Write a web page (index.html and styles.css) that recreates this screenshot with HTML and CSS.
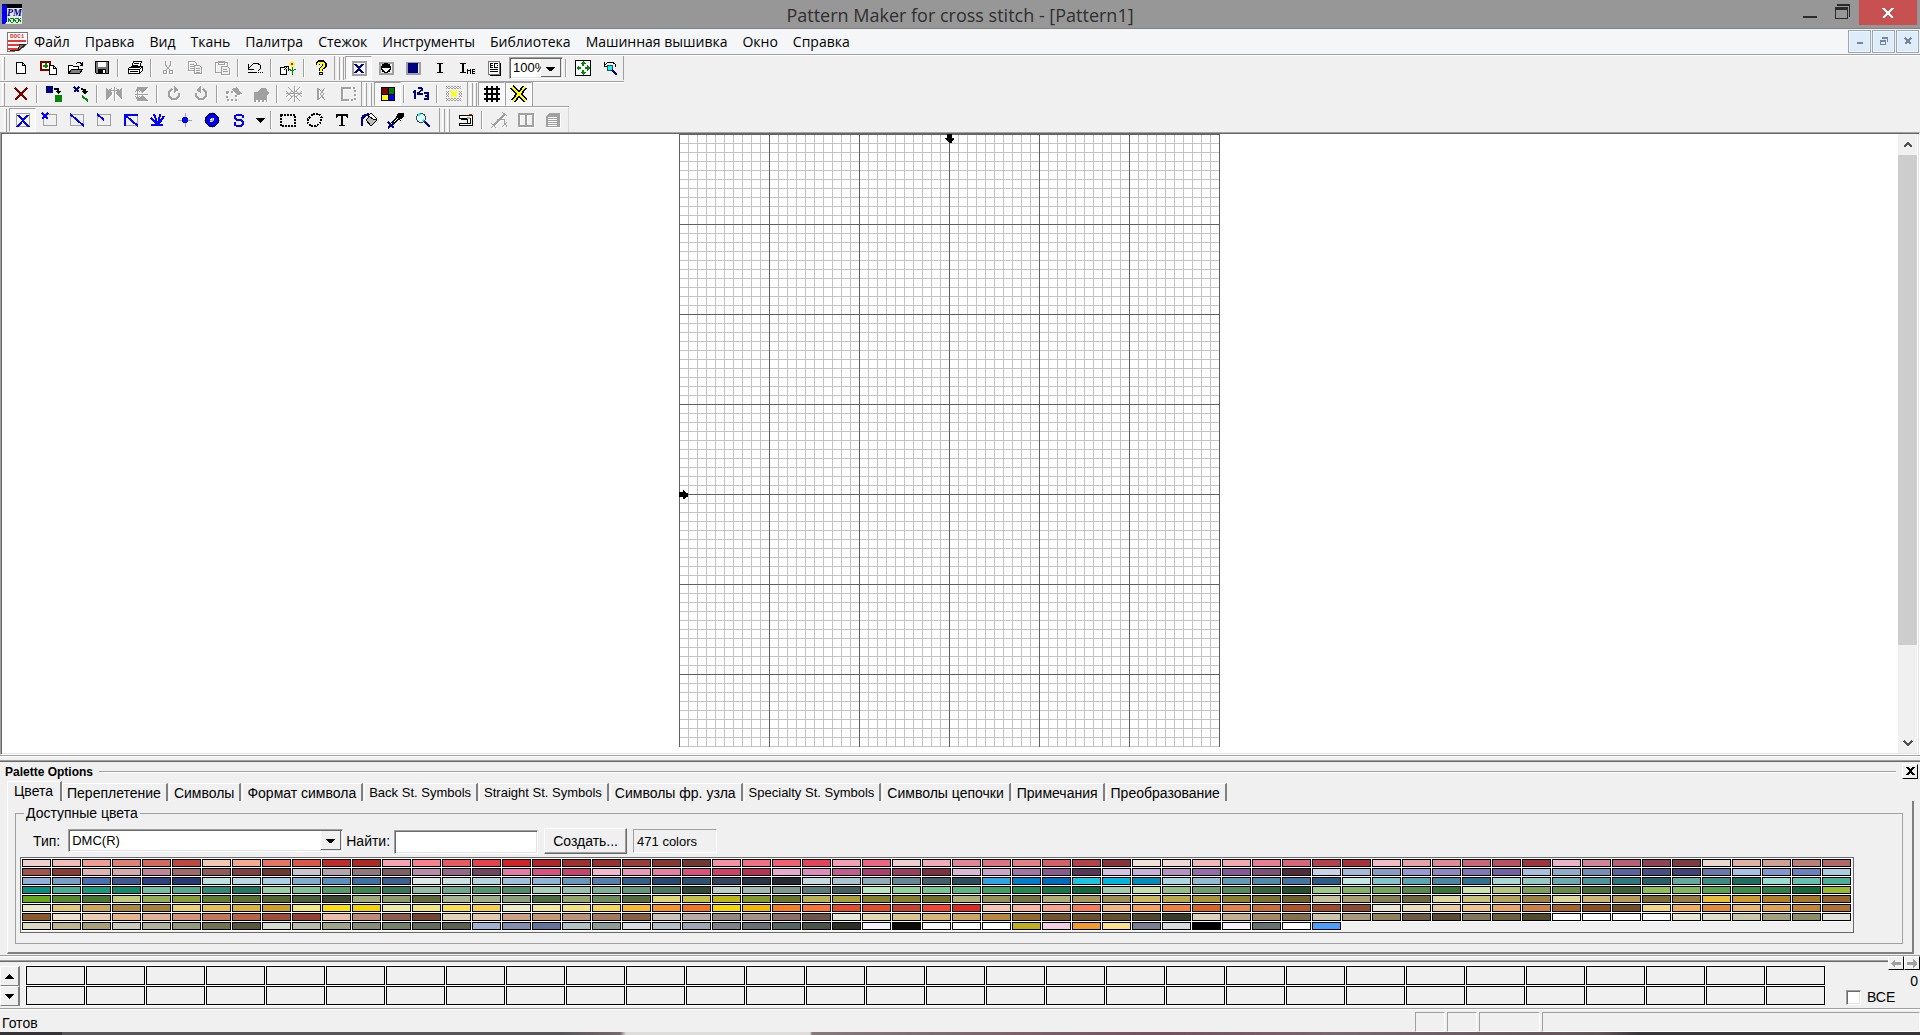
FILE: index.html
```html
<!DOCTYPE html>
<html lang="ru">
<head>
<meta charset="utf-8">
<title>Pattern Maker for cross stitch - [Pattern1]</title>
<link rel="stylesheet" href="styles.css">
</head>
<body>
<header class="titlebar">
  <svg class="app-icon" width="20" height="20" viewBox="0 0 20 20"><path fill="#000" d="M0 0h20v4H0z"/><path fill="#e8e8f0" d="M4 4h16v16H4z"/><path fill="#00f" d="M0 1h5v17l-3 2H0z"/><text x="5" y="12" font-family="Liberation Serif, serif" font-size="10" font-weight="700" font-style="italic" fill="#000080">PM</text><g stroke="#080" fill="none"><path d="M6 14l3 4h2l3-4h2l3 4M6 18l3-4h2l3 4h2l3-4"/></g></svg>
  <h1>Pattern Maker for cross stitch - [Pattern1]</h1>
  <div class="window-buttons">
    <button aria-label="Свернуть"><svg width="16" height="20"><path fill="#2b2b2b" d="M1 16h14v2H1z"/></svg></button>
    <button aria-label="Восстановить"><svg width="16" height="20"><path fill="#2b2b2b" d="M2 4h13v13h-1V6H2zM0 7h13v12H0zM1 10v8h11v-8z" fill-rule="evenodd"/></svg></button>
    <button class="close" aria-label="Закрыть"><svg width="12" height="10"><path d="M1 0l10 10M11 0L1 10" stroke="#fff" stroke-width="2"/></svg></button>
  </div>
</header>

<nav class="menubar">
  <svg width="20" height="20" viewBox="0 0 20 20" class="doc-icon"><path d="M0 0h20v12l-7 6-9 2-4-1z" fill="#fff" stroke="#777"/><text x="3" y="6" font-family="Liberation Mono, monospace" font-size="6" font-weight="700" fill="#e03030">DOC1</text><path d="M1 8l2 2 2-2 2 2 2-2 2 2 2-2 2 2 2-2 2 2M1 10l2-2 2 2 2-2 2 2 2-2 2 2 2-2 2 2 2-2M1 12l2 2 2-2 2 2 2-2 2 2 2-2 2 2M1 14l2-2 2 2 2-2 2 2 2-2 2 2 2-2M1 16l2 2 2-2 2 2 2-2 2 2M1 18l2-2 2 2 2-2 2 2 2-2" stroke="#e33" fill="none"/><path d="M19 12l-6 0-2 6-8 1 9-1z" fill="#777" stroke="#222"/></svg>
  <a href="#">Файл</a><a href="#">Правка</a><a href="#">Вид</a><a href="#">Ткань</a><a href="#">Палитра</a><a href="#">Стежок</a><a href="#">Инструменты</a><a href="#">Библиотека</a><a href="#">Машинная вышивка</a><a href="#">Окно</a><a href="#">Справка</a>
  <div class="mdi-buttons">
    <button aria-label="Свернуть документ"><svg width="8" height="8"><path fill="#76869a" d="M1 5h6v2H1z"/></svg></button>
    <button aria-label="Восстановить документ"><svg width="8" height="8"><path fill="#76869a" fill-rule="evenodd" d="M2 0h6v5H7V2H2zM0 3h6v5H0zM1 5v2h4V5z"/></svg></button>
    <button aria-label="Закрыть документ"><svg width="8" height="8"><path d="M1 1l6 6M7 1L1 7" stroke="#76869a" stroke-width="2"/></svg></button>
  </div>
</nav>

<div class="toolbars">
  <div class="row row-top">
    <div class="band"><i class="grip"></i>
      <button><svg viewBox="0 0 16 16"><path fill="#fff" stroke="#000" d="M3.500 2.500h6l3 3v8h-9zM9.500 2.500v3h3"/></svg></button>
      <button><svg viewBox="0 0 16 16"><path d="M1 2h9v8H1z" fill="#fff" stroke="#800000" stroke-width="2"/><path d="M5.500 3v5M3 5.500h5" stroke="#080" stroke-width="2"/><path fill="#fff" stroke="#000" d="M9.500 5.500h4l3 3v6h-7zM13.500 5.500v3h3"/></svg></button>
      <button><svg viewBox="0 0 16 16"><path fill="#fff" stroke="#000" d="M1.500 13.500v-8h4l1 1h5v3"/><path fill="#808080" stroke="#000" d="M1.500 13.500l3-4h11l-3 4z"/><path stroke="#000" fill="none" d="M9 3.500l2-1h2l2 2M15.500 2v3h-3"/></svg></button>
      <button><svg viewBox="0 0 16 16"><path fill="#777" stroke="#000" d="M1.500 1.500h13v12h-12l-1-1z"/><path fill="#fff" d="M4 2h8v5H4z"/><path d="M4 9h8v5H4z"/><path fill="#fff" d="M9 10h2v3H9z"/></svg></button>
      <i class="sep"></i>
      <button><svg viewBox="0 0 16 16"><path fill="#fff" stroke="#000" d="M4.500 7.500l2-6h8l-2 6zM1.500 8.500l3-2h11l-3 3v4h-11zM1.500 9.500h11l3-3v4l-3 3M3 11.500h8"/><path stroke="#000" d="M7 3.500h5M6 5.500h5"/></svg></button>
      <i class="sep"></i>
      <button disabled><svg viewBox="0 0 16 16"><path class="dis" d="M5.500 1v4l5 6M10.500 1v4l-5 6M7 8h2"/><circle class="dis" cx="5" cy="12" r="2"/><circle class="dis" cx="11" cy="12" r="2"/></svg></button>
      <button disabled><svg viewBox="0 0 16 16"><path class="dis" d="M1.500 1.500h6l2 2v7h-8zM3 4.500h4M3 6.500h4M3 8.500h4"/><path class="dis paper" d="M7.500 5.500h5l2 2v6h-7zM9 8.500h4M9 10.500h4M9 12.500h4"/></svg></button>
      <button disabled><svg viewBox="0 0 16 16"><path class="dis" d="M1.500 2.500h12v10h-12zM4.500 1.500h6v3h-6z"/><path class="dis paper" d="M7.500 6.500h6l2 2v6h-8zM9 9.500h4M9 11.500h5"/></svg></button>
      <i class="sep"></i>
      <button><svg viewBox="0 0 16 16"><path fill="none" stroke="#000" d="M1.500 4v5h5M2 8l3-3 2-2h3l3 2v4l-2 2M1 12.500h9M11 12.500h1M13 12.500h1M15 12.500h1"/></svg></button>
      <i class="sep"></i>
      <button><svg viewBox="0 0 16 16"><path fill="#fff" stroke="#000" d="M.500 7.500h4l2 2v5h-6z"/><path fill="none" stroke="#000" d="M4 10l4-4M4 6.500h4v4"/><path d="M9 3h6v2H9zM11 1h2v6h-2z" fill="#ff0"/><path d="M11 3h2v2h-2z" fill="red"/><path d="M12.500 7v8M9 9l3 2 4-2" stroke="#080" fill="none"/></svg></button>
      <i class="sep"></i>
      <button><svg viewBox="0 0 16 16"><path d="M4.500 5V4l1.500-2h4l1.500 2v2L8 9v2M8 12v3" fill="none" stroke="#000" stroke-width="4"/><path d="M5 5V4l1.500-1h3L11 4v2L8 9v2M8 13v1" fill="none" stroke="#ff0" stroke-width="2"/></svg></button>
    </div>
    <div class="band tight"><i class="grip"></i><i class="grip"></i>
      <button class="on"><svg viewBox="0 0 16 16"><path d="M1.500 1.500h13v13h-13z" class="dis2"/><path d="M4 4l8 9M12 4l-8 9" stroke="#000080" stroke-width="2"/></svg></button>
      <button><svg viewBox="0 0 16 16"><path d="M1.500 2.500h13v11h-13z" class="dis2"/><circle cx="8" cy="8" r="5"/><path d="M4 8h8l-3 4H7z" fill="#fff"/></svg></button>
      <button><svg viewBox="0 0 16 16"><path d="M1.500 2.500h13v11h-13z" class="dis2"/><path fill="#000080" d="M3 3h10v10H3z"/></svg></button>
      <button><svg viewBox="0 0 16 16"><path d="M5 3h6v1H9v8h2v1H5v-1h2V4H5z"/></svg></button>
      <button><svg viewBox="0 0 16 16"><path d="M1 3h6v1H5v8h2v1H1v-1h2V4H1z"/><path fill="none" stroke="#000" d="M8.500 14V9M11.500 14V9M9 10.500h2M16 9.500h-2.500v4H16M14 11.500h2"/></svg></button>
      <button><svg viewBox="0 0 16 16"><path fill="#fff" stroke="#777" d="M2.500 1.500h11v13h-11z"/><path d="M14 3v12H4" fill="none" stroke="#000"/><path fill="none" stroke="#000" d="M4 3.500h3M4 5.500h3M4 7.500h3M8 3.500h4M8 5.500h1M11 5.500h1M8 7.500h4M4 9.500h8M4 11.500h8M4.500 3v5M8.500 3v5"/></svg></button>
      <select class="zoom" aria-label="Масштаб"><option>100%</option></select>
      <i class="sep"></i>
      <button><svg viewBox="0 0 16 16"><path fill="#fff" stroke="#000" d="M.500.500h15v15H.500z"/><path fill="#080" d="M8 1l3 3H9v2H7V4H5zM8 15l3-3H9v-2H7v2H5zM1 8l3-3v2h2v2H4v2zM15 8l-3-3v2h-2v2h2v2z"/></svg></button>
      <button><svg viewBox="0 0 16 16"><path d="M2.500 2v4h4M3 5l3-3h4l3 2 1 3" fill="none" stroke="#000"/><circle cx="8" cy="8" r="3" fill="#0ff" stroke="#444"/><path d="M10 10l5 5" stroke="#000080" stroke-width="2"/></svg></button>
    </div>
  </div>

  <div class="row">
    <div class="band"><i class="grip"></i>
      <button><svg viewBox="0 0 16 16"><path d="M2 2l3 3 3 3 6 6M14 2L2 14" fill="none" stroke="#800000" stroke-width="1.500"/></svg></button>
      <i class="sep"></i>
      <button><svg viewBox="0 0 16 16"><path fill="#000080" d="M0 0h7v7H0z"/><path fill="#080" d="M9 9h7v7H9z"/><path fill="none" stroke="#000" stroke-width="2" d="M8 3h4v4"/><path d="M9 5h6l-3 3z"/></svg></button>
      <button><svg viewBox="0 0 16 16"><path d="M1 1l5 5M6 1L1 6" stroke="#000080" stroke-width="2"/><path d="M8 3l4 1v3" fill="none" stroke="#000" stroke-width="2"/><path d="M9 5h6l-3 4z"/><path d="M9 10l6 5" stroke="#080" stroke-width="2"/></svg></button>
      <i class="sep"></i>
      <button disabled><svg viewBox="0 0 16 16"><path fill="#a0a0a0" d="M0 1l6 7-6 6zM16 1l-6 7 6 6z"/><path class="dis" d="M8 1v14M4 4.500h8M6 2l-3 2.500L6 7M10 2l3 2.500L10 7"/></svg></button>
      <button disabled><svg viewBox="0 0 16 16"><path fill="#a0a0a0" d="M3 1h12L9 7zM3 15h12L9 9z"/><path class="dis" d="M2 8h13M4.500 4v8M2 6l2.500-3L7 6M2 10l2.500 3L7 10"/></svg></button>
      <i class="sep"></i>
      <button disabled><svg viewBox="0 0 16 16"><path class="dis2" d="M6 3L3 6v4l3 3h4l3-3V7"/><path fill="#a0a0a0" d="M8 0l5 4-5 3z"/></svg></button>
      <button disabled><svg viewBox="0 0 16 16"><path class="dis2" d="M10 3l3 3v4l-3 3H6l-3-3V7"/><path fill="#a0a0a0" d="M8 0L3 4l5 3z"/></svg></button>
      <i class="sep"></i>
      <button disabled><svg viewBox="0 0 16 16"><path class="dis2" stroke-dasharray="2 2" d="M1 6h9v8H1z"/><path fill="#a0a0a0" d="M6 3l5-2 2 3 3 4-5 1z"/></svg></button>
      <button disabled><svg viewBox="0 0 16 16"><path fill="#a0a0a0" d="M1 6h3l2-2 2-2h5l3 5-2 3v4H1z"/><path class="dis2" stroke-dasharray="2 2" d="M1 15h13"/></svg></button>
      <i class="sep"></i>
      <button disabled><svg viewBox="0 0 16 16"><path class="dis" d="M2 1l6 6 6-6M0 5l3 3-3 3M6 5L3 8l3 3M10 5l3 3-3 3M16 5l-3 3 3 3M2 15l6-6 6 6M8 0v16M0 7.500h16"/></svg></button>
      <button disabled><svg viewBox="0 0 16 16"><path class="dis2" d="M5 2v12"/><path class="dis" d="M6 3l5 5-5 5M12 2L7 8l5 6"/></svg></button>
      <button disabled><svg viewBox="0 0 16 16"><path class="dis2" d="M9 2H2v12h7"/><path class="dis2" stroke-dasharray="2 2" d="M9 2h6v12H9"/></svg></button>
    </div>
    <div class="band"><i class="grip"></i><i class="grip"></i>
      <button class="on"><svg viewBox="0 0 16 16"><path d="M1 1h14v14H1z"/><path fill="maroon" d="M2 2h6v6H2z"/><path fill="green" d="M9 2h5v6H9z"/><path fill="#ff0" d="M2 9h6v5H2z"/><path fill="#00f" d="M9 9h5v5H9z"/></svg></button>
      <i class="sep"></i>
      <button><svg viewBox="0 0 16 16"><path fill="none" stroke="#000080" stroke-width="1.500" d="M0 6l2-1v8M5 3l1-1h2l1 1v1L5 7v1h5M11 7h4v6h-4M12 10h3"/></svg></button>
      <i class="sep"></i>
      <button><svg viewBox="0 0 16 16"><path class="dis" d="M0 3l3-3 3 3 3-3 3 3 3-3M0 0l3 3 3-3 3 3 3-3 3 3M0 15l3-3 3 3 3-3 3 3 3-3M0 12l3 3 3-3 3 3 3-3 3 3M0 5l3 3-3 3M3 5L0 8l3 3M13 5l3 3-3 3M16 5l-3 3 3 3"/><path d="M5 5l6 6M11 5l-6 6" stroke="#ff0" stroke-width="2"/></svg></button>
    </div>
    <div class="band tight"><i class="grip"></i><i class="grip"></i>
      <button class="on"><svg viewBox="0 0 16 16"><path d="M3 0v16M8 0v16M13 0v16M0 3h16M0 8h16M0 13h16" stroke="#000" stroke-width="2"/></svg></button>
      <button class="on"><svg viewBox="0 0 16 16"><path d="M1 1l14 14M14 1L2 15" stroke="#000" stroke-width="5"/><path d="M1 1l14 14M14 1L2 15" stroke="#ff0" stroke-width="2"/></svg></button>
    </div>
  </div>

  <div class="row row-bottom">
    <div class="band roomy"><i class="grip"></i>
      <button class="on"><svg viewBox="0 0 16 16"><path class="dis" d="M1.500 1.500h13v13h-13z"/><path d="M3 3l11 12M13 3L2 15" stroke="#00f" stroke-width="2"/></svg></button>
      <button><svg viewBox="0 0 16 16"><path class="dis" d="M1.500 2.500h13v11h-13z"/><path d="M0 1l6 6M6 1L0 7" stroke="#00f" stroke-width="2"/></svg></button>
      <button><svg viewBox="0 0 16 16"><path class="dis" d="M1.500 2.500h13v11h-13z"/><path d="M1 2l14 12" stroke="#00f" stroke-width="2"/></svg></button>
      <button><svg viewBox="0 0 16 16"><path class="dis" d="M1.500 2.500h13v11h-13z"/><path d="M1 2l7 6" stroke="#00f" stroke-width="2"/></svg></button>
      <button><svg viewBox="0 0 16 16"><path class="dis" d="M1.500 2.500h13v11h-13z"/><path d="M2 14V3h13M2 3l13 11" fill="none" stroke="#00f" stroke-width="2"/></svg></button>
      <button><svg viewBox="0 0 16 16"><path d="M8 13L1 6M8 13L4 2M8 13l2-11M8 13l6-9M1 13h12" fill="none" stroke="#00f" stroke-width="2"/></svg></button>
      <button><svg viewBox="0 0 16 16"><path class="dis" d="M8 1v14M1 8h14"/><circle cx="8" cy="8" r="3" fill="#00f"/></svg></button>
      <button><svg viewBox="0 0 16 16"><path class="dis" d="M8 0v16M0 8h16"/><circle cx="8" cy="8" r="4.500" fill="none" stroke="#000080" stroke-width="5"/><circle cx="8" cy="8" r="4" fill="none" stroke="#00f" stroke-width="3"/></svg></button>
      <button><svg viewBox="0 0 16 16"><path fill="none" stroke="#00f" stroke-width="2" d="M12 6V4l-2-1H6L4 4v2l2 2h4l2 2v2l-2 2H6l-2-1v-3"/></svg></button>
      <button class="narrow"><svg viewBox="0 0 16 16"><path d="M3 6h10L8 11z"/></svg></button>
      <i class="sep"></i>
      <button><svg viewBox="0 0 16 16"><path d="M1 3h14v11H1z" fill="none" stroke="#000" stroke-width="2" stroke-dasharray="2 1"/></svg></button>
      <button><svg viewBox="0 0 16 16"><path d="M6 2h6l3 4-2 5-4 3H4L1 11V7z" fill="none" stroke="#000" stroke-width="2" stroke-dasharray="2 1"/></svg></button>
      <button><svg viewBox="0 0 16 16"><path d="M2 2h12v4h-1L12 4H9v9h2v1H5v-1h2V4H4L3 6H2z"/></svg></button>
      <button><svg viewBox="0 0 16 16"><path fill="#bbb" stroke="#000" d="M5 8l6-6 5 6-6 6z"/><path fill="#fff" stroke="#000" d="M7 4l3-3 6 6-2 1z"/><path d="M8 2L2 4v3M5 4L1 6v8" fill="none" stroke="#000080" stroke-width="2"/></svg></button>
      <button><svg viewBox="0 0 16 16"><path d="M11 1h4v4l-3 2-3-3zM8 4l5 5" stroke="#000"/><path d="M10 6l-6 6" stroke="#000" stroke-width="3"/><path d="M10 6l-6 6" stroke="#fff"/><path d="M0 10l6 6M6 11l-6 5" stroke="#000080" stroke-width="2"/></svg></button>
      <button><svg viewBox="0 0 16 16"><circle cx="6" cy="6" r="4.500" fill="#dff" stroke="#444"/><path d="M3 4l2-2M8 8l1 1" stroke="#0ff" stroke-width="2"/><path d="M10 10l5 5" stroke="#000080" stroke-width="2"/></svg></button>
    </div>
    <div class="band last"><i class="grip"></i><i class="grip"></i>
      <button><svg viewBox="0 0 16 16"><path fill="#fff" stroke="#000" d="M1.500 6V3.500h13v10h-13v-2h8v-4h-6V6z"/><path d="M3 6.500h9M12.500 6v6M3 11.500h9" stroke="#000"/><path fill="red" d="M11 2h3v1h-3z"/><path fill="#aa8" d="M9 5h3v2H9z"/></svg></button>
      <i class="sep"></i>
      <button disabled><svg viewBox="0 0 16 16"><path class="dis2" d="M2 14L14 2"/><path class="dis" d="M0 11l5 5M5 11l-5 5M11 0l5 4M6 7h7v3l3 5M16 10l-5 5"/></svg></button>
      <button disabled><svg viewBox="0 0 16 16"><path class="dis2" d="M1 2h14v12H1zM8 2v12"/></svg></button>
      <button disabled><svg viewBox="0 0 16 16"><path fill="#a0a0a0" d="M4 1h11v14H1V4z"/><path stroke="#fff" d="M3 5.500h9M3 7.500h9M3 9.500h9M3 11.500h9M3 13.500h9"/></svg></button>
    </div>
  </div>
</div>

<main class="workspace">
  <div class="canvas">
    <div class="chart">
      <svg class="mark-top" width="9" height="9"><path d="M2 0h5v4h2v1L7 8 6 9H4L3 8 1 5H0V4h2z"/></svg>
      <svg class="mark-left" width="9" height="9"><path d="M0 2v5h4v2h1l3-2 1-1V4L8 3 5 1V0H4v2z"/></svg>
    </div>
  </div>
  <div class="scrollbar">
    <button aria-label="Вверх"><svg width="10" height="8"><path d="M1 6l4-4 4 4" fill="none" stroke="#505050" stroke-width="2"/></svg></button>
    <div class="track"><div class="thumb"></div></div>
    <button aria-label="Вниз"><svg width="10" height="8"><path d="M1 2l4 4 4-4" fill="none" stroke="#505050" stroke-width="2"/></svg></button>
  </div>
</main>

<section class="options">
  <div class="options-head">
    <h2>Palette Options</h2><hr>
    <button class="x-button" aria-label="Закрыть панель"><svg width="9" height="8"><path d="M1 0l7 8M8 0L1 8" stroke="#000" stroke-width="2"/></svg></button>
  </div>
  <div class="tabs">
    <button class="active">Цвета</button><button>Переплетение</button><button>Символы</button><button>Формат символа</button><button lang="en">Back St. Symbols</button><button lang="en">Straight St. Symbols</button><button>Символы фр. узла</button><button lang="en">Specialty St. Symbols</button><button>Символы цепочки</button><button>Примечания</button><button>Преобразование</button>
  </div>
  <div class="page">
    <fieldset>
      <legend>Доступные цвета</legend>
      <div class="filters">
        <label for="type">Тип:</label>
        <select id="type" lang="en"><option>DMC(R)</option></select>
        <label for="find">Найти:</label>
        <input id="find" type="text">
        <button class="create">Создать...</button>
        <output lang="en">471 colors</output>
      </div>
      <div class="swatches" id="swatches"></div>
    </fieldset>
  </div>
</section>

<section class="palette">
  <div class="spin">
    <button aria-label="Предыдущий ряд"><svg width="9" height="5"><path d="M0 5h9L5 0H4z"/></svg></button>
    <button aria-label="Следующий ряд"><svg width="9" height="5"><path d="M0 0h9L5 5H4z"/></svg></button>
  </div>
  <div class="slots" id="slots"></div>
  <div class="palette-side">
    <span class="count">0</span>
    <label class="all"><input type="checkbox">ВСЕ</label>
  </div>
  <div class="pager">
    <button disabled aria-label="Назад"><svg width="10" height="9"><path fill="#a0a0a0" d="M0 4l4-4v3h6v3H4v3L0 5z"/></svg></button>
    <button disabled aria-label="Вперёд"><svg width="10" height="9"><path fill="#a0a0a0" d="M10 4L6 0v3H0v3h6v3l4-4z"/></svg></button>
  </div>
</section>

<footer class="status">
  <span class="message">Готов</span>
  <i class="pane small"></i><i class="pane small"></i><i class="pane medium"></i><i class="pane large"></i>
</footer>
<div class="taskbar"></div>
<script src="palette.js"></script>
</body>
</html>
```
FILE: styles.css
```css
* { box-sizing: border-box; }
body {
  margin: 0;
  height: 100vh;
  display: flex;
  flex-direction: column;
  overflow: hidden;
  background: #f0f0f0;
  color: #000;
  font: 14px/16px "Liberation Sans", Arial, sans-serif;
}
button, input, select { font: inherit; color: inherit; margin: 0; padding: 0; border: 0; border-radius: 0; background: none; appearance: none; }
button { display: flex; align-items: center; justify-content: center; }
svg { display: block; shape-rendering: crispEdges; }
:lang(en) { font-size: 13px; }

/* title bar */
.titlebar {
  display: grid;
  grid-template-columns: 1fr auto 1fr;
  height: 29px;
  background: #979797;
  border-bottom: 1px solid #828282;
}
.app-icon { margin: 4px 0 0 2px; }
.titlebar h1 { margin: 0; font: 18px/30px "Open Sans", sans-serif; color: #2f2f2f; }
.window-buttons { display: flex; justify-content: flex-end; align-items: flex-start; padding-right: 3px; }
.window-buttons button { width: 33px; height: 20px; }
.window-buttons .close { width: 58px; height: 25px; background: #c75050; }

/* menu */
.menubar {
  display: flex;
  align-items: center;
  gap: 1px;
  height: 26px;
  padding-left: 7px;
  background: #f5f6f8;
  border-bottom: 1px solid #a0a0a0;
  font: 14px/20px "Open Sans", sans-serif;
}
.menubar a { color: #000; text-decoration: none; padding: 0 7px; }
.doc-icon { overflow: visible; margin-right: -1px; }
.mdi-buttons { display: flex; gap: 1px; margin: 0 1px 1px auto; }
.mdi-buttons button { width: 23px; height: 23px; background: #deebf8; border: 1px solid #9aa7b8; box-shadow: inset 0 0 0 1px #eef5fc; }

/* toolbars */
.toolbars { border-top: 1px solid #fff; display: flex; flex-direction: column; align-items: flex-start; }
.row { display: flex; height: 24px; }
.row-top { height: 26px; padding-bottom: 1px; border-bottom: 1px solid #a0a0a0; box-shadow: 0 1px #fff; }
.row-bottom { height: 26px; border-top: 1px solid #a0a0a0; box-shadow: inset 0 1px #fff; padding: 1px 0 0 2px; }
.band { display: flex; align-items: center; border-right: 1px solid #a0a0a0; padding-left: 2px; }
.band.roomy { padding-right: 3px; }
.band.last { border-right-color: #d8d8d8; padding-right: 2px; }
.grip { width: 3px; height: 23px; margin-right: 2px; border-right: 1px solid #a0a0a0; border-left: 1px solid #fff; }
.tight .grip { margin-right: 1px; }
.row button { width: 27px; height: 24px; }
.row button svg { width: 16px; height: 16px; overflow: visible; }
.row button:disabled svg { filter: drop-shadow(1px 1px 0 #fff); }
.row .narrow { width: 16px; }
.row .on { background: #f8f8f8; border: 1px solid; border-color: #a0a0a0 #fff #fff #a0a0a0; }
.sep { width: 6px; height: 18px; background: linear-gradient(90deg, transparent 2px, #a0a0a0 2px 3px, #fff 3px 4px, transparent 4px); }
.dis { fill: none; stroke: #a0a0a0; }
.dis2 { fill: none; stroke: #a0a0a0; stroke-width: 2; }
.paper { fill: #f0f0f0; }
select, input[type=text] {
  background-color: #fff;
  border: 1px solid;
  border-color: #a0a0a0 #fff #fff #a0a0a0;
  box-shadow: inset 1px 1px #696969, inset -1px -1px #e3e3e3;
}
select {
  background-image:
    linear-gradient(#000, #000), linear-gradient(#000, #000), linear-gradient(#000, #000), linear-gradient(#000, #000),
    linear-gradient(#f0f0f0, #f0f0f0), linear-gradient(#696969, #696969);
  background-repeat: no-repeat;
  background-size: 9px 1px, 7px 1px, 5px 1px, 3px 1px, 19px calc(100% - 3px), 20px calc(100% - 2px);
  background-position: right 7px top 9px, right 8px top 10px, right 9px top 11px, right 10px top 12px, right 2px top 1px, right 1px top 1px;
}
.zoom { width: 54px; height: 22px; padding: 0 21px 0 3px; margin-left: 2px; font-size: 13px; text-overflow: clip; }

/* chart */
.workspace {
  flex: 1;
  min-height: 0;
  display: flex;
  background: #fff;
  border: 1px solid;
  border-color: #a0a0a0 #fff #fff #a0a0a0;
  box-shadow: inset 1px 1px #696969, inset -1px -1px #e3e3e3;
  padding: 1px 2px 1px 1px;
}
.canvas { flex: 1; display: flex; justify-content: center; padding: 0 1px 6px 0; }
.chart {
  position: relative;
  width: 541px;
  background:
    linear-gradient(90deg, #606060 1px, transparent 1px) 0 0 / 90px 90px,
    linear-gradient(#606060 1px, transparent 1px) 0 0 / 90px 90px,
    linear-gradient(90deg, #c4c4c4 1px, transparent 1px) 0 0 / 9px 9px,
    linear-gradient(#c4c4c4 1px, transparent 1px) 0 0 / 9px 9px;
}
.mark-top { position: absolute; left: 266px; top: 0; }
.mark-left { position: absolute; left: 0; top: 356px; }
.scrollbar { width: 19px; display: flex; flex-direction: column; background: #f0f0f0; }
.scrollbar button { height: 21px; }
.track { flex: 1; }
.thumb { height: 85%; background: #cdcdcd; }

/* palette options */
.options {
  padding: 6px 6px 1px 7px;
  border-top: 1px solid #a0a0a0;
  background: linear-gradient(#fff 1px, transparent 1px 4px, #a0a0a0 4px 5px, #696969 5px 6px, transparent 6px);
}
.options-head { display: flex; align-items: center; gap: 6px; height: 19px; margin: 0 -4px 0 -2px; }
.options-head h2 { margin: 0; font-size: 12px; line-height: 16px; }
.options-head hr { flex: 1; height: 2px; margin: 0; border: 0; background: linear-gradient(#a0a0a0 50%, #fff 50%); }
.x-button { width: 16px; height: 15px; margin-bottom: 1px; border: 1px solid; border-color: #fff #000 #000 #fff; }
.tabs { display: flex; align-items: flex-end; height: 20px; }
.tabs button {
  height: 18px;
  margin-right: 1px;
  padding: 0 5px 0 4px;
  white-space: nowrap;
  border: solid;
  border-width: 1px 2px 0 1px;
  border-color: #fff #808080 #f0f0f0 #fff;
}
.tabs .active { height: 20px; padding: 0 7px 2px 6px; margin-right: 0; }
.page { border-left: 1px solid #fff; border-right: 2px solid #808080; border-bottom: 2px solid #808080; padding: 4px 9px 8px 7px; }
fieldset { margin: 0; min-width: 0; padding: 6px 4px 10px 4px; border: 1px solid #a0a0a0; }
legend { padding: 0 2px; margin-left: 4px; line-height: 16px; }
.filters { display: flex; align-items: center; height: 27px; padding-left: 13px; margin-bottom: 3px; }
.filters select { width: 275px; height: 23px; margin: 0 3px 0 8px; padding-left: 3px; }
.filters input { width: 144px; height: 24px; margin: 2px 6px 0 4px; }
.create { width: 83px; height: 26px; border: 1px solid; border-color: #fff #696969 #696969 #fff; box-shadow: inset -1px -1px #a0a0a0; }
.filters output { width: 84px; height: 24px; margin: 1px 0 0 6px; padding: 4px 3px; border: 1px solid; border-color: #a0a0a0 #fff #fff #a0a0a0; }
.swatches {
  display: grid;
  grid-template-columns: repeat(61, 29px);
  grid-auto-rows: 8px;
  gap: 1px;
  width: fit-content;
  padding: 1px 2px 2px 1px;
  border: 1px solid #696969;
}
.swatches button { border: 1px solid #000; box-shadow: 0 0 0 1px #fff; }

/* used colours */
.palette {
  position: relative;
  display: flex;
  height: 53px;
  padding-top: 10px;
  border-top: 1px solid #a0a0a0;
  background: linear-gradient(#fff 1px, transparent 1px 4px, #a0a0a0 4px 5px, #696969 5px 6px, transparent 6px);
}
.spin { width: 20px; margin-right: 6px; }
.spin button { width: 20px; height: 20px; border: 1px solid; border-color: #fff #808080 #808080 #fff; border-width: 1px 2px 1px 1px; }
.slots { display: grid; grid-template-columns: repeat(30, 59px); grid-auto-rows: 19px; gap: 1px; }
.slots button { border: 1px solid #000; box-shadow: 0 0 0 1px #fff; }
.palette-side { flex: 1; display: flex; flex-direction: column; padding: 7px 2px 0 21px; }
.count { align-self: flex-end; line-height: 16px; }
.all { display: flex; align-items: center; gap: 6px; }
.all input { width: 15px; height: 15px; background: #fff; border: 1px solid; border-color: #a0a0a0 #fff #fff #a0a0a0; box-shadow: inset 1px 1px #696969, inset -1px -1px #e3e3e3; }
.pager { position: absolute; right: 0; top: 0; display: flex; background: #f0f0f0; }
.pager button { width: 16px; height: 14px; border: 1px solid; border-color: #fff #000 #000 #fff; }

/* status bar */
.status { display: flex; gap: 2px; height: 24px; padding-top: 3px; border-top: 1px solid #a0a0a0; box-shadow: inset 0 1px #fff; }
.message { flex: 1; padding-left: 2px; line-height: 22px; }
.pane { height: 20px; border: 1px solid; border-color: #a0a0a0 #fff #fff #a0a0a0; }
.small { width: 30px; }
.medium { width: 61px; }
.large { width: 378px; }
.taskbar { height: 3px; background: linear-gradient(90deg, #353338 0 62px, #58555a 62px 560px, #77686c 620px, #e0dcdc 626px 810px, #85797c 812px, #75505f 1160px, #7a6570 1340px, #5f5557 1600px, #38343a 1640px); }
```
FILE: palette.js
```js
const rows = [
  "f1d0cb f2bdb9 f09c96 df8078 d1695f bd4840 f2c9b0 f6a98c e77560 dd5744 c02c2e af2822 f6a3b3 fa8090 e85a5f e8414b d12325 b12429 9f3030 9a302f 9a3c3a 873632 703832 f491a4 f27084 f06070 e5435a f49fb3 ee6485 f0cdd0 f0aab8 e48499 dd7283 e28088 d45f69 b3434a 88343a eee2da f0d8d4 f2b8b8 f2a8ad e87e93 d9657a b5404e a8323c f2bcc4 e5a2a8 e08a96 cb6679 b95064 9c3540 ebb2c8 d48499 b96078 904358 7d3a40 ecd9ce e0b1a2 cfa192 bb7f77 b26866",
  "9f5349 883d34 dcb4b4 d4a9b0 bf859b a06a6c 8f5a58 7e4045 6c3830 cbc3cf b3a5ae 90767e 7d6065 b88cad 966888 704560 e27aa4 d65283 c8426f f2b6d0 ea98b8 e97ea3 d9507b cf4168 b43350 e6aacf de8cbb bf5f8f a8406f 993f62 7d3045 dcb8d8 cca4ca a075a8 885a90 533857 d4c2e4 c8b0dc b592c2 966ba9 85589a 7d5075 4f2c3b c9d2e8 a8b8d8 8b9bc4 979ad0 8e87c0 7f78b5 7062a3 a9bfdd 90abca 758eb5 5864a0 464f82 3f4475 6878aa a7c2e4 8098cd 6a81be abcde2",
  "8fb0da 789ec8 4a70b4 40578f 2e4180 283a75 bfe0e0 b8d8e4 a8cfe4 80adcd 5c90bc 3f70a3 3c6092 dbe8e4 cbe2e4 b4d4de 9cc0de 8eb4d8 6797bd 567fb0 355f8a 28496f 2e5072 344562 2b3548 242b33 c4d9e0 a9c4d0 8cadb8 658898 445f69 2f4c5c 2fa3e4 007ecb 006cc0 1cc4e2 00b6de 008fbf aad6e2 8fbcd2 609ab4 4f8aaa 4275a3 2a5c86 c2e6e4 84c2cc 5ca3b3 4b86a3 2f728f a7d6d4 92c9c5 6ba9b0 4e949d 2c7880 285f68 62a9a0 3a8c80 1f6e62 98dcd2 66c0b2 4ab09c",
  "068f80 48ad94 189a80 14896a 75bfa4 54a990 308a76 227763 99d0a6 82c29a 569b6b 3f8450 367556 90bda4 6fa88c 539570 508a6a a6cfba 98c3b0 7fb098 66977c 4a7860 2d4a39 bdd1c8 a0bcb2 7c9a92 587d7c 42605f b8e8c0 8ed29c 7ac693 5cb583 3fa066 20894f 167648 12673e a4ccae c4e0b0 94c088 6d9e72 568a5c 35633d 244e2c 9ccc88 84b36a 74a65a 5b8b4c 387238 cde4ae b4c67c 7ea15a 668c48 476c38 3a6038 90bf58 80b85c 58a350 3b8e4a 2c8148 126a3a 98bb2c",
  "66a81c 558a2e 477732 bfcd7c 92ae56 869e3c 607f34 5a7033 536630 4a5f3c 3d4a32 a0ab7c 8e9a6a 60693c a8b492 9eb088 8aa17c 4c6c44 92a66e 6d8c5c 546c40 dcd878 c4c24c bcb81c 84982e 68762c b8b256 a8a03a 84802c 858030 70702c adb078 949154 72733e b0ae74 a5985c 9e9052 cbbb62 b9a84c a89438 8c8030 7a7030 6e5f2c c5c49e a8a070 858054 6e6840 dcd8a0 cbc47c b3a45e 9c8244 dcd89c cbb676 b59c58 7d6a38 997c40 e8bd3a cc9c33 b28128 a5782c 94642c",
  "e8e8cc e0c878 cba858 ab8a40 a38238 e8d074 e0c050 d8b43c cba024 efe980 f8e00c f2d400 eceba4 efe680 f6e050 f4d04c ebebc4 efe89c f0e080 f4d658 f7b92c f79428 f47420 f6d800 f5b800 f87c20 f97434 e64c2c e44a28 c94030 f24434 dc2a24 f2c4b4 f8b49f f6a58c f67c5c f2b47e f4a060 f08040 da6428 df8446 c86c38 ae542c a04c28 8e4a30 ebe4d4 ebdcb8 ebcca4 eec48c e8a56a cd7f48 a6632e 8a4e20 734c28 efd684 f2ad5a e28c38 e8b66c dca352 c08634 b07030",
  "8b5a2b ede0cc edcbb0 e8b48c e2b092 d59378 c2775c b86248 9f4c38 943f34 ecbca8 c08a76 8d5c4c 744530 e4d2b4 e4c8ac cda284 c69874 bb9278 a57a5c 8a5e42 ccc4ba b9aaa4 948780 a69088 8c7068 6c5448 e8e8d8 e4d8b0 d8c48c d8b476 cda464 b58844 936830 73542c 694f2e 62502f 4f452c 3a3a28 ded2bc c3ae8e a38864 85704a cdc2aa aa9a7c 92825e 6e5a42 5c4a34 83765a 6a5e3c 50492e ffffff ffffff ffffff fafafa e8e8d4 e2dfc8 c8c8a8 a3a080 8c8c68 e2e3d8",
  "dad8c0 bfb490 a79e78 cbccc0 b0b29c 94987c 707252 58563c d6dccf b8bcac a0a48c 868c78 74806a 636c5c 5c604e a4b0cf 828ead 64739a b4c2c4 8c9a98 dadce0 b6bec8 9fa5b2 80828a 687074 58645f 4c5248 2a2e24 f6f2fc 0c0a06 f8f8f8 ffffff ffffff bfae20 f4d0e2 f69830 fae08c 7a7e90 d8dadf 000000 f8f2f8 687070 ffffff 4c9ffc"
];
const swatches = document.getElementById("swatches");
for (const color of rows.join(" ").split(" ")) {
  const b = document.createElement("button");
  b.style.backgroundColor = "#" + color;
  swatches.append(b);
}
const slots = document.getElementById("slots");
for (let i = 0; i < 60; i++) slots.append(document.createElement("button"));
```
